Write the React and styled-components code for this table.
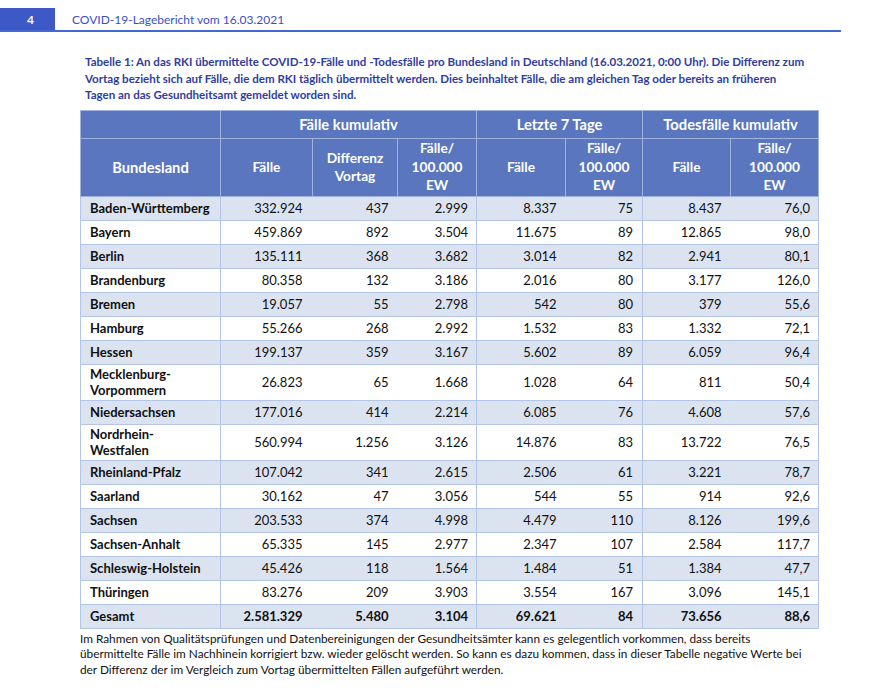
import React from 'react';
import styled, { createGlobalStyle } from 'styled-components';

const GlobalStyle = createGlobalStyle`
  html, body { margin: 0; padding: 0; background: #fff; }
  body { font-family: Lato, "Open Sans", sans-serif; color: #111; }
`;

const Page = styled.div`
  width: 875px;
  height: 688px;
  overflow: hidden;
  padding-top: 8px;
  box-sizing: border-box;
`;

const TopBar = styled.header`
  display: flex;
  align-items: center;
  width: 841px;
  height: 22px;
  border-bottom: 2px solid #4468d3;
`;

const PageNum = styled.div`
  width: 55px;
  height: 100%;
  box-sizing: border-box;
  padding-left: 6px;
  background: #3c59c6;
  color: #fff;
  font-weight: 700;
  font-size: 12px;
  display: flex;
  align-items: center;
  justify-content: center;
`;

const Title = styled.div`
  margin-left: 17px;
  font-size: 12px;
  color: #3b4fc4;
`;

const Caption = styled.p`
  margin: 22px 0 0 85px;
  font-size: 11.55px;
  font-weight: 700;
  line-height: 16.5px;
  color: #2f3d9e;
  white-space: nowrap;
`;

const Table = styled.table`
  margin: 6px 0 0 80px;
  width: 738px;
  border-collapse: collapse;
  table-layout: fixed;
  border: 1px solid #b4c6e7;
  font-size: 13px;
`;

const Th = styled.th`
  background: #5a76bf;
  color: #fff;
  font-weight: 700;
  font-size: ${(p) => (p.$group ? '14.7px' : '13.7px')};
  text-align: center;
  vertical-align: middle;
  border: 1px solid #9fb3de;
  padding: 0 4px;
  line-height: 18.5px;
  height: ${(p) => p.$h || 'auto'};
`;

const Tr = styled.tr`
  background: ${(p) => (p.$shaded ? '#dbe3f0' : '#fff')};
`;

const NameCell = styled.td`
  height: ${(p) => (p.$double ? '35px' : '23px')};
  padding: 0 0 0 9px;
  font-weight: 700;
  text-align: left;
  vertical-align: middle;
  line-height: 16px;
  border-top: 1px solid #b4c6e7;
  border-right: 1px solid #b4c6e7;
  white-space: pre-line;
`;

const NumCell = styled.td`
  padding: 0 ${(p) => p.$pr || 9}px 0 0;
  text-align: right;
  vertical-align: middle;
  font-weight: ${(p) => (p.$bold ? 700 : 400)};
  border-top: 1px solid #b4c6e7;
  border-right: ${(p) => (p.$sep ? '1px solid #b4c6e7' : 'none')};
`;

const Footer = styled.p`
  margin: 2px 0 0 80px;
  font-size: 11.8px;
  line-height: 15.5px;
  color: #111;
  white-space: nowrap;
`;

const rows = [
  ['Baden-Württemberg', '332.924', '437', '2.999', '8.337', '75', '8.437', '76,0'],
  ['Bayern', '459.869', '892', '3.504', '11.675', '89', '12.865', '98,0'],
  ['Berlin', '135.111', '368', '3.682', '3.014', '82', '2.941', '80,1'],
  ['Brandenburg', '80.358', '132', '3.186', '2.016', '80', '3.177', '126,0'],
  ['Bremen', '19.057', '55', '2.798', '542', '80', '379', '55,6'],
  ['Hamburg', '55.266', '268', '2.992', '1.532', '83', '1.332', '72,1'],
  ['Hessen', '199.137', '359', '3.167', '5.602', '89', '6.059', '96,4'],
  ['Mecklenburg-\nVorpommern', '26.823', '65', '1.668', '1.028', '64', '811', '50,4'],
  ['Niedersachsen', '177.016', '414', '2.214', '6.085', '76', '4.608', '57,6'],
  ['Nordrhein-\nWestfalen', '560.994', '1.256', '3.126', '14.876', '83', '13.722', '76,5'],
  ['Rheinland-Pfalz', '107.042', '341', '2.615', '2.506', '61', '3.221', '78,7'],
  ['Saarland', '30.162', '47', '3.056', '544', '55', '914', '92,6'],
  ['Sachsen', '203.533', '374', '4.998', '4.479', '110', '8.126', '199,6'],
  ['Sachsen-Anhalt', '65.335', '145', '2.977', '2.347', '107', '2.584', '117,7'],
  ['Schleswig-Holstein', '45.426', '118', '1.564', '1.484', '51', '1.384', '47,7'],
  ['Thüringen', '83.276', '209', '3.903', '3.554', '167', '3.096', '145,1'],
];
const total = ['Gesamt', '2.581.329', '5.480', '3.104', '69.621', '84', '73.656', '88,6'];

const colWidths = [140, 92, 85, 79, 89, 77, 88, 88];
const sepCols = [3, 5, 7];
const padRight = [10, 9, 8, 9, 9, 9, 8];

function DataRow({ data, shaded, bold }) {
  const [name, ...nums] = data;
  return (
    <Tr $shaded={shaded}>
      <NameCell $double={name.includes('\n')}>{name}</NameCell>
      {nums.map((n, i) => (
        <NumCell key={i} $bold={bold} $sep={sepCols.includes(i + 1)} $pr={padRight[i]}>
          {n}
        </NumCell>
      ))}
    </Tr>
  );
}

const per100k = (
  <>
    Fälle/
    <br />
    100.000
    <br />
    EW
  </>
);

export default function App() {
  return (
    <Page>
      <GlobalStyle />
      <TopBar>
        <PageNum>4</PageNum>
        <Title>COVID-19-Lagebericht vom 16.03.2021</Title>
      </TopBar>
      <Caption>
        Tabelle 1: An das RKI übermittelte COVID-19-Fälle und -Todesfälle pro Bundesland in Deutschland (16.03.2021, 0:00 Uhr). Die Differenz zum
        <br />
        Vortag bezieht sich auf Fälle, die dem RKI täglich übermittelt werden. Dies beinhaltet Fälle, die am gleichen Tag oder bereits an früheren
        <br />
        Tagen an das Gesundheitsamt gemeldet worden sind.
      </Caption>
      <Table>
        <colgroup>
          {colWidths.map((w, i) => (
            <col key={i} style={{ width: w }} />
          ))}
        </colgroup>
        <thead>
          <tr>
            <Th $group $h="27px" />
            <Th $group colSpan={3}>Fälle kumulativ</Th>
            <Th $group colSpan={2}>Letzte 7 Tage</Th>
            <Th $group colSpan={2}>Todesfälle kumulativ</Th>
          </tr>
          <tr>
            <Th $group $h="57px">Bundesland</Th>
            <Th>Fälle</Th>
            <Th>
              Differenz
              <br />
              Vortag
            </Th>
            <Th>{per100k}</Th>
            <Th>Fälle</Th>
            <Th>{per100k}</Th>
            <Th>Fälle</Th>
            <Th>{per100k}</Th>
          </tr>
        </thead>
        <tbody>
          {rows.map((r, i) => (
            <DataRow key={r[0]} data={r} shaded={i % 2 === 0} />
          ))}
          <DataRow data={total} shaded bold />
        </tbody>
      </Table>
      <Footer>
        Im Rahmen von Qualitätsprüfungen und Datenbereinigungen der Gesundheitsämter kann es gelegentlich vorkommen, dass bereits
        <br />
        übermittelte Fälle im Nachhinein korrigiert bzw. wieder gelöscht werden. So kann es dazu kommen, dass in dieser Tabelle negative Werte bei
        <br />
        der Differenz der im Vergleich zum Vortag übermittelten Fällen aufgeführt werden.
      </Footer>
    </Page>
  );
}
